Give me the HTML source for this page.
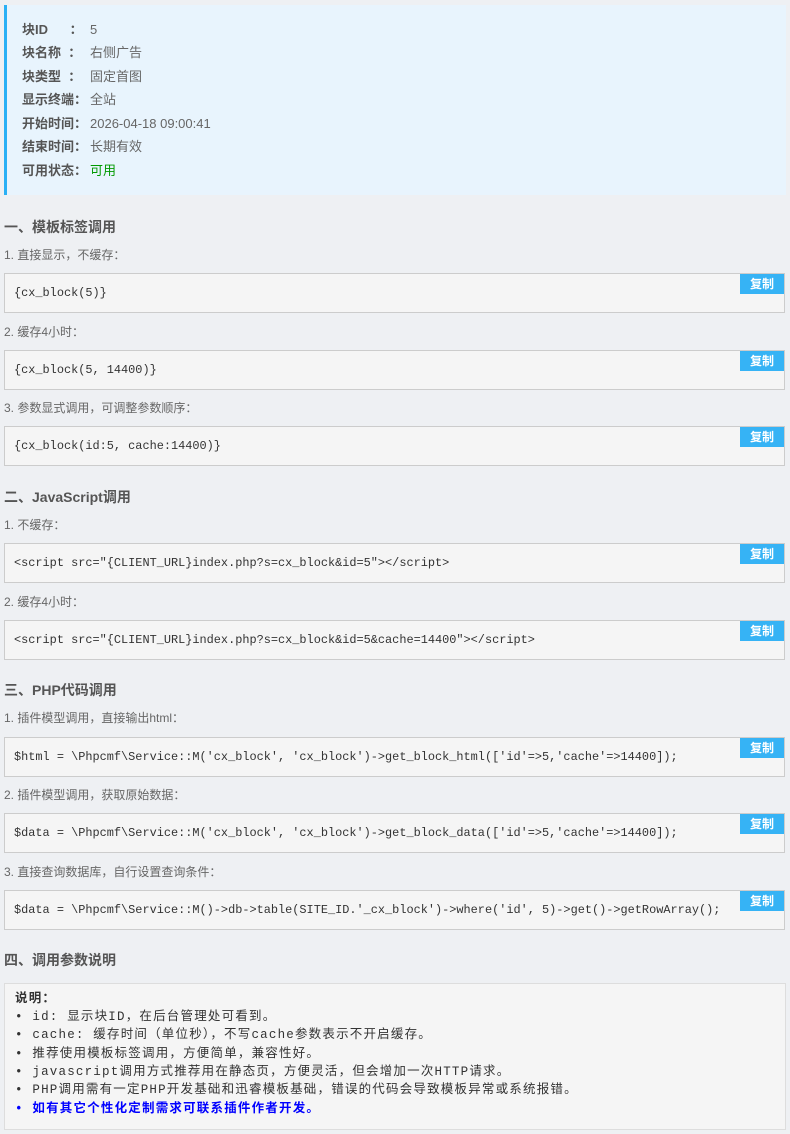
<!DOCTYPE html>
<html><head><meta charset="utf-8"><style>
*{margin:0;padding:0;box-sizing:border-box}
body{width:790px;height:1134px;background:#eef0f3;font-family:"Liberation Sans","Noto Sans CJK SC",sans-serif;position:relative;overflow:hidden;color:#555}
.info{position:absolute;left:4px;top:5px;width:782px;height:190px;background:#e8f4fd;border-left:3px solid #2ab0f5}
.row{position:absolute;left:22px;font-size:13px;line-height:16px;color:#666}
.row b{display:inline-block;width:68px;color:#555}
.h{position:absolute;left:4px;font-size:14px;font-weight:bold;color:#555;line-height:18px}
.l{position:absolute;left:4px;font-size:12px;color:#666;line-height:16px}
.box{position:absolute;left:4px;width:781px;height:40px;background:#f5f5f5;border:1px solid #ccc}
.box pre{position:absolute;left:9px;top:11px;font-family:"Liberation Mono",monospace;font-size:11.9px;line-height:16px;color:#333}
.btn{position:absolute;right:0;top:0;width:44px;height:20px;background:#36b3f5;color:#fff;font-size:12px;font-weight:bold;text-align:center;line-height:20px}
.note{position:absolute;left:4px;top:983px;width:782px;height:147px;background:#f5f5f5;border:1px solid #ddd;font-family:"Liberation Mono","Noto Sans CJK SC",monospace;font-size:12.5px;color:#333}
.note div{position:absolute;left:10px;line-height:18px;white-space:nowrap;letter-spacing:1.2px}
</style></head><body>
<div class="info"></div>
<div class="row" style="top:22px"><b>块ID&nbsp;&nbsp;&nbsp;&nbsp;&nbsp;&nbsp;：</b>5</div>
<div class="row" style="top:45px"><b>块名称&nbsp;&nbsp;：</b>右侧广告</div>
<div class="row" style="top:69px"><b>块类型&nbsp;&nbsp;：</b>固定首图</div>
<div class="row" style="top:92px"><b>显示终端：</b>全站</div>
<div class="row" style="top:116px"><b>开始时间：</b>2026-04-18 09:00:41</div>
<div class="row" style="top:139px"><b>结束时间：</b>长期有效</div>
<div class="row" style="top:163px"><b>可用状态：</b><span style="color:#090">可用</span></div>

<div class="h" style="top:218px">一、模板标签调用</div>
<div class="l" style="top:247px">1. 直接显示，不缓存：</div>
<div class="box" style="top:273px"><pre>{cx_block(5)}</pre><div class="btn">复制</div></div>
<div class="l" style="top:324px">2. 缓存4小时：</div>
<div class="box" style="top:350px"><pre>{cx_block(5, 14400)}</pre><div class="btn">复制</div></div>
<div class="l" style="top:400px">3. 参数显式调用，可调整参数顺序：</div>
<div class="box" style="top:426px"><pre>{cx_block(id:5, cache:14400)}</pre><div class="btn">复制</div></div>

<div class="h" style="top:488px">二、JavaScript调用</div>
<div class="l" style="top:517px">1. 不缓存：</div>
<div class="box" style="top:543px"><pre>&lt;script src="{CLIENT_URL}index.php?s=cx_block&amp;id=5"&gt;&lt;/script&gt;</pre><div class="btn">复制</div></div>
<div class="l" style="top:594px">2. 缓存4小时：</div>
<div class="box" style="top:620px"><pre>&lt;script src="{CLIENT_URL}index.php?s=cx_block&amp;id=5&amp;cache=14400"&gt;&lt;/script&gt;</pre><div class="btn">复制</div></div>

<div class="h" style="top:681px">三、PHP代码调用</div>
<div class="l" style="top:710px">1. 插件模型调用，直接输出html：</div>
<div class="box" style="top:737px"><pre>$html = \Phpcmf\Service::M('cx_block', 'cx_block')-&gt;get_block_html(['id'=&gt;5,'cache'=&gt;14400]);</pre><div class="btn">复制</div></div>
<div class="l" style="top:787px">2. 插件模型调用，获取原始数据：</div>
<div class="box" style="top:813px"><pre>$data = \Phpcmf\Service::M('cx_block', 'cx_block')-&gt;get_block_data(['id'=&gt;5,'cache'=&gt;14400]);</pre><div class="btn">复制</div></div>
<div class="l" style="top:864px">3. 直接查询数据库，自行设置查询条件：</div>
<div class="box" style="top:890px"><pre>$data = \Phpcmf\Service::M()-&gt;db-&gt;table(SITE_ID.'_cx_block')-&gt;where('id', 5)-&gt;get()-&gt;getRowArray();</pre><div class="btn">复制</div></div>

<div class="h" style="top:951px">四、调用参数说明</div>
<div class="note">
<div style="top:6px;font-weight:bold">说明：</div>
<div style="top:24px">• id: 显示块ID，在后台管理处可看到。</div>
<div style="top:42px">• cache: 缓存时间（单位秒），不写cache参数表示不开启缓存。</div>
<div style="top:61px">• 推荐使用模板标签调用，方便简单，兼容性好。</div>
<div style="top:79px">• javascript调用方式推荐用在静态页，方便灵活，但会增加一次HTTP请求。</div>
<div style="top:97px">• PHP调用需有一定PHP开发基础和迅睿模板基础，错误的代码会导致模板异常或系统报错。</div>
<div style="top:116px;color:#00f;font-weight:bold">• 如有其它个性化定制需求可联系插件作者开发。</div>
</div>
</body></html>
